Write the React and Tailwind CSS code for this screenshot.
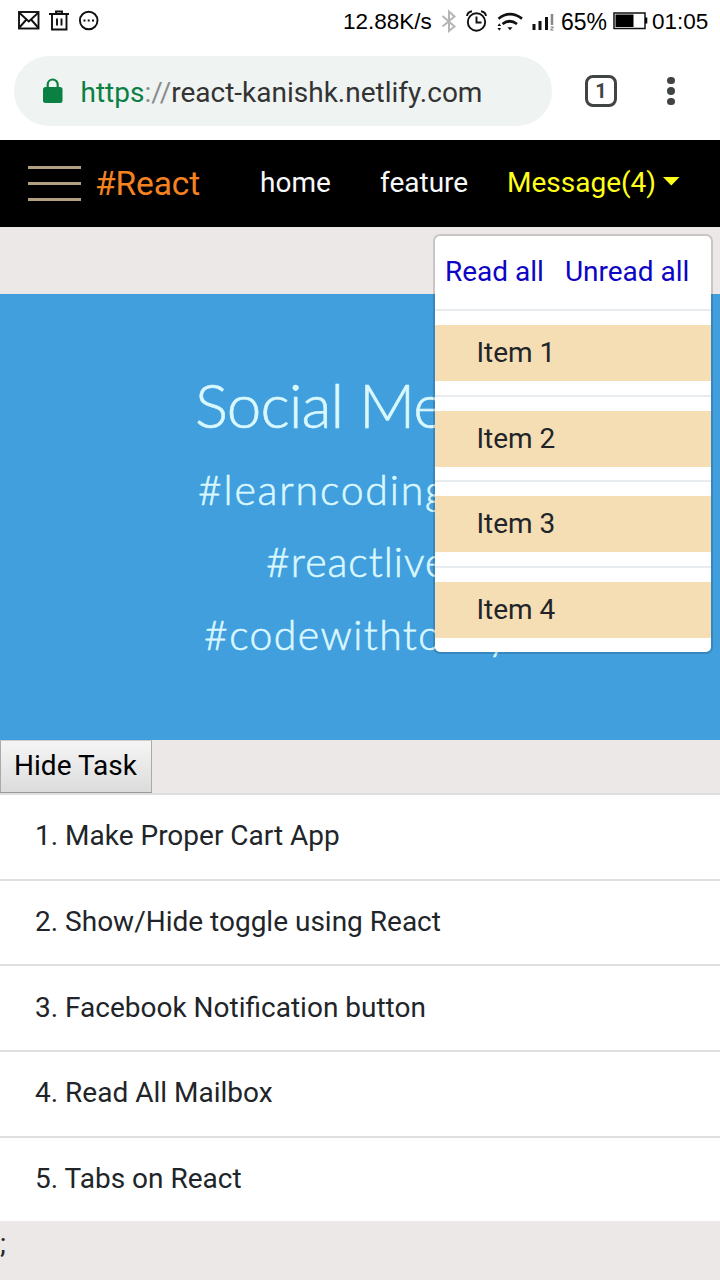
import React from "react";

const tasks = [
  "Make Proper Cart App",
  "Show/Hide toggle using React",
  "Facebook Notification button",
  "Read All Mailbox",
  "Tabs on React",
];

const items = ["Item 1", "Item 2", "Item 3", "Item 4"];

function StatusBar() {
  return (
    <div className="flex h-[42px] items-center bg-white pr-[11px] pl-[18px] font-['Liberation_Sans',sans-serif] text-[22.5px] leading-none text-black">
      <svg width="82" height="24" viewBox="0 0 82 24" fill="none" stroke="#111" strokeWidth="1.9">
        <rect x="1" y="3" width="19.500" height="16.500" />
        <path d="M1 3.500l9.800 9L20.500 3.500M1 19l7-8M20.500 19l-7-8" />
        <path d="M31 5h20M34 5v15.500h14.500V5M38 5V2.500h6V5M39 9.500v7M43.500 9.500v7" />
        <circle cx="70.700" cy="11.500" r="8.800" />
        <path d="M65.500 11.500h2M69.700 11.500h2M74 11.500h2" strokeWidth="2" />
      </svg>
      <span className="mt-[2px] ml-auto w-[90px] pl-px whitespace-nowrap">12.88K/s</span>
      <svg className="ml-[8px]" width="120" height="30" viewBox="0 0 120 30" fill="none">
        <path d="M2.500 10l12 10.500L9 25V5.500l5.500 5L2.500 20.500" stroke="#b5b5b5" strokeWidth="2" />
        <g stroke="#111" strokeWidth="1.900">
          <circle cx="36.500" cy="16" r="8.700" />
          <path d="M36.500 10.500v6h5M27 10q.5-4 5-4.800M46 10q-.5-4-5-4.800" />
        </g>
        <g stroke="#111" strokeWidth="2.700">
          <path d="M58.500 12.700q11.500-9 23.500 0M62.500 18q7-5.500 14.500 0" />
        </g>
        <path d="M67.500 21.200h5l-2.500 3zM57.500 20l1.800-2.700 1.800 2.700zM57.500 22h3.600l-1.800 2.700z" fill="#111" />
        <path d="M92.500 18h3v6h-3zM98.500 15h3v9h-3zM105 11h3v13h-3z" fill="#111" />
        <path d="M112 8v11" stroke="#888" strokeWidth="2.500" />
        <path d="M110.500 21h3l-3 3h3" stroke="#777" />
      </svg>
      <span className="mt-[2px] ml-[1px] w-[48px] text-[23px] whitespace-nowrap">65%</span>
      <svg className="ml-[4px]" width="36" height="20" viewBox="0 0 36 20">
        <rect x="1" y="2" width="31" height="15.500" fill="none" stroke="#111" strokeWidth="1.500" />
        <path d="M2.500 3.500h18v12.500h-18zM32 6.500h2.300v6H32z" fill="#000" />
      </svg>
      <span className="mt-[2px] ml-[3px] w-[57px] whitespace-nowrap">01:05</span>
    </div>
  );
}

function AddressBar() {
  return (
    <div className="flex h-[98px] items-center bg-white pl-[14px]">
      <div className="flex h-[70px] w-[538px] items-center rounded-full bg-[#eff3f2] pl-[28px]">
        <svg width="21" height="28" viewBox="0 0 21 28">
          <rect x="1" y="10" width="19.500" height="16" rx="2.500" fill="#0b8043" />
          <path d="M5.700 12V7.500a5 5 0 0 1 10 0v4.500" fill="none" stroke="#0b8043" strokeWidth="2.200" />
        </svg>
        <span className="mt-[3px] ml-[17.5px] text-[28px] leading-none text-[#333]">
          <span className="text-[#0b8043]">https</span>
          <span className="text-[#8a8d8c]">://</span>
          react-kanishk.netlify.com
        </span>
      </div>
      <div className="ml-[33px] flex h-8 w-8 items-center justify-center rounded-[8px] border-[3.5px] border-[#404445] text-[20px] leading-none font-bold text-[#404445]">
        1
      </div>
      <div className="ml-[50px] flex flex-col gap-[3px]">
        <i className="h-[7.500px] w-[7.500px] rounded-full bg-[#404445]" />
        <i className="h-[7.500px] w-[7.500px] rounded-full bg-[#404445]" />
        <i className="h-[7.500px] w-[7.500px] rounded-full bg-[#404445]" />
      </div>
    </div>
  );
}

function Dropdown() {
  return (
    <div className="absolute top-[94px] right-[7px] z-10 h-[420px] w-[280px] overflow-hidden rounded-[7px] border-2 border-black/15 bg-white bg-clip-padding text-[28px]">
      <div className="flex h-[73px] items-center gap-[21px] pb-[2px] pl-[10px] whitespace-nowrap text-[#0d04c4]">
        <a>Read all</a>
        <a>Unread all</a>
      </div>
      {items.map((item) => (
        <div key={item} className="h-[85.700px] border-t-2 border-[#e9ecef] pt-[14px]">
          <div className="flex h-[56px] items-center bg-[#f5deb3] pl-[41.500px] text-[#212529]">{item}</div>
        </div>
      ))}
    </div>
  );
}

function Navbar() {
  return (
    <nav className="relative flex h-[87px] items-center bg-black text-[28px] leading-none">
      <div className="ml-[28px] flex w-[53px] flex-col gap-[12.500px]">
        <i className="h-[3.500px] bg-[#b3a080]" />
        <i className="h-[3.500px] bg-[#b3a080]" />
        <i className="h-[3.500px] bg-[#b3a080]" />
      </div>
      <span className="ml-[14px] w-[106px] text-[33.500px] tracking-[-0.1px] text-[#f58220]">#React</span>
      <span className="mb-[2px] ml-[59px] w-[71px] text-[#f8f9fa]">home</span>
      <span className="mb-[2px] ml-[49px] w-[88px] text-[#f8f9fa]">feature</span>
      <span className="mb-[2px] ml-[39px] w-[148px] whitespace-nowrap text-[#ffff1a]">Message(4)</span>
      <svg className="mb-[5px] ml-[8px]" width="17" height="9" viewBox="0 0 17 9">
        <path d="M0 0h16.500L8.300 8.500z" fill="#ffff1a" />
      </svg>
      <Dropdown />
    </nav>
  );
}

function Banner() {
  return (
    <div className="flex h-[446px] flex-col overflow-hidden bg-[#419fdd] pt-[72px] font-['Lato',sans-serif] font-light whitespace-nowrap text-[#d9f8ff] [-webkit-text-stroke:0.6px_#d9f8ff]">
      <div className="h-[88px] pl-[195px] text-[62px] leading-[76px] tracking-[-1px]">Social Media</div>
      <div className="h-[72px] pl-[198px] text-[41px] leading-[72px] tracking-[1.800px]">#learncoding</div>
      <div className="h-[72px] pl-[266px] text-[41px] leading-[72px] tracking-[1px]">#reactlive</div>
      <div className="h-[72px] pl-[204px] text-[41px] leading-[73px] tracking-[1.400px]">#codewithtoday</div>
    </div>
  );
}

export default function App() {
  return (
    <div className="h-[1280px] w-[720px] overflow-hidden bg-[#ece8e7] font-['Roboto',sans-serif] text-[28px] text-[#212529]">
      <StatusBar />
      <AddressBar />
      <Navbar />
      <main className="pt-[67px]">
        <Banner />
        <button className="block h-[53px] w-[152px] border border-t-[#ccc] border-r-[#aaa] border-b-[#999] border-l-[#aaa] bg-linear-to-b from-[#f5f5f5] to-[#dcdcdc] pr-px pb-[2px] leading-[48px] text-black">
          Hide Task
        </button>
        <ul>
          {tasks.map((task, i) => (
            <li key={task} className="flex h-[85.700px] items-center border-t-2 border-[#dfdfdf] bg-white pb-px pl-[35px]">
              {i + 1}. {task}
            </li>
          ))}
        </ul>
        <div className="leading-[46px]">;</div>
      </main>
    </div>
  );
}
